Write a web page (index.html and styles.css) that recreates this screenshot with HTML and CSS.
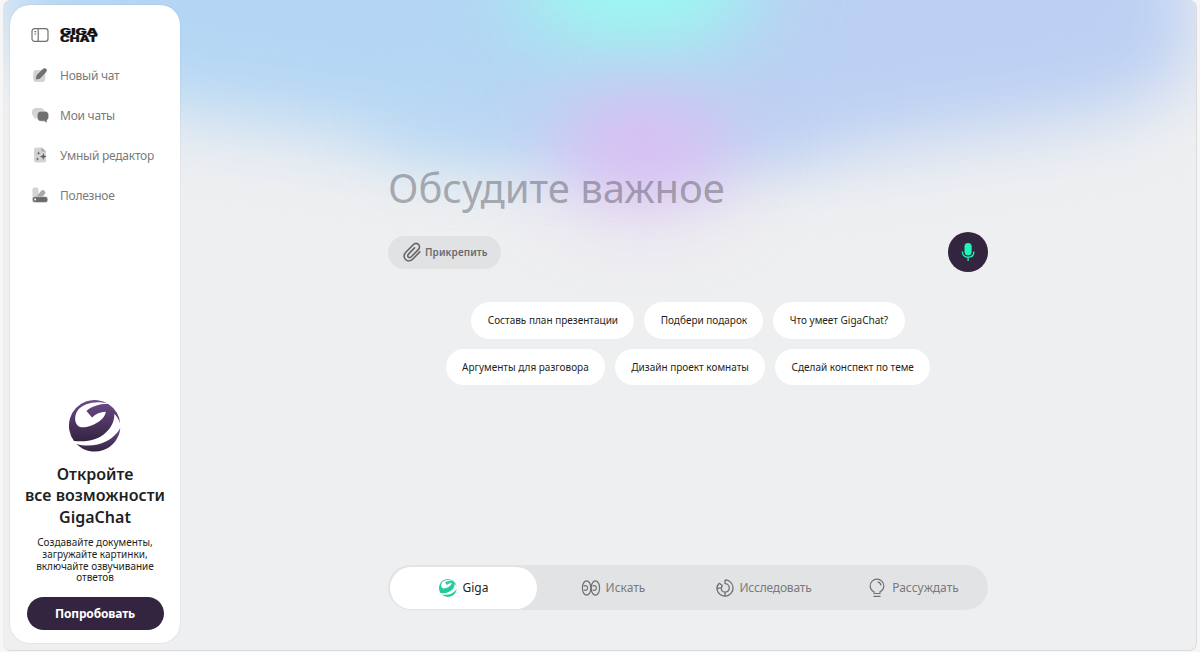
FILE: index.html
```
<!DOCTYPE html>

<html lang="ru">

<head>
	<title>GigaChat</title>
	<meta charset="utf-8" />
	<meta name="viewport" content="width=device-width,initial-scale=1" />
	<link rel="stylesheet" href="styles.css">
</head>

<body>
	<div class="app">
		<div class="glow">
			<div class="blob blob-left"></div>
			<div class="blob blob-right"></div>
			<div class="blob blob-middle"></div>
			<div class="blob blob-cyan"></div>
			<div class="blob blob-pink"></div>
		</div>

		<aside class="sidebar">
			<div class="brand">
				<svg class="icon" viewBox="0 0 20 20" fill="none" stroke="#707070" stroke-width="1.2">
					<rect x="2" y="3.6" width="16" height="12.8" rx="2.6" />
					<path d="M8.2 3.6v12.8M4.4 6.7h1.8M4.4 9h1.8" />
				</svg>
				<svg class="logo" viewBox="0 0 38 15" role="img">
					<text x="0" y="7.2" textLength="38" lengthAdjust="spacingAndGlyphs">GIGA</text>
					<text x="0" y="14.1" textLength="37.5" lengthAdjust="spacingAndGlyphs">CHAT</text>
				</svg>
			</div>

			<nav class="menu">
				<a class="menu-item">
					<svg class="icon" viewBox="0 0 20 20">
						<rect x="3.2" y="5" width="12" height="12" rx="3" fill="#d3d3d3" />
						<path d="M5.800 14.600l.7-4.400 6-5.900c1.200-1.200 2.700-1.500 3.700-.5s.8 2.500-.4 3.700l-5.900 6.200z" fill="#707070" />
					</svg>
					<span>Новый чат</span>
				</a>
				<a class="menu-item">
					<svg class="icon" viewBox="0 0 20 20">
						<path d="M6 3h4.500c2 0 4 1.500 4 4v3c0 2-2 3.300-4 3.300H6.500L4 13.500v-1.700C2.700 11 2 9.800 2 8.300V7c0-2.500 2-4 4-4z" fill="#d3d3d3" />
						<path d="M11 6.200h4c2 0 3.700 1.500 3.700 3.500V12c0 1.400-.6 2.400-1.700 3.200v2.800L14.300 16.200H11c-2.200 0-3.800-1.500-3.800-3.700V9.700c0-2 1.600-3.500 3.800-3.500z" fill="#707070" stroke="#fff" stroke-width=".5" />
					</svg>
					<span>Мои чаты</span>
				</a>
				<a class="menu-item">
					<svg class="icon" viewBox="0 0 20 20">
						<path d="M6 2.500h5.500l4.500 4V15.500c0 1.200-.8 2-2 2H6c-1.200 0-2-.8-2-2v-11c0-1.200.8-2 2-2z" fill="#d3d3d3" />
						<path d="M11.500 2.500v2.700c0 .8.5 1.300 1.300 1.300H16z" fill="#a9a9a9" />
						<path d="M13.300 8l.9 2.600 2.600.9-2.600.9-.9 2.600-.9-2.600-2.600-.9 2.600-.9zM8.600 6.300l.5 1.400 1.400.5-1.400.5-.5 1.400-.5-1.400-1.400-.5 1.400-.5zM7.500 12.300l.5 1.300 1.200.5-1.200.4-.5 1.300-.4-1.300-1.300-.4 1.300-.5z" fill="#606060" />
					</svg>
					<span>Умный редактор</span>
				</a>
				<a class="menu-item">
					<svg class="icon" viewBox="0 0 20 20">
						<rect x="2.500" y="2.500" width="6" height="14" rx="2" fill="#d3d3d3" />
						<path d="M4.500 14l6.700-8.200c.8-1 1.900-1 2.700-.3l.9.8c.9.800.9 1.800.1 2.700L9.500 15z" fill="#a9a9a9" />
						<rect x="2.400" y="11.600" width="15.400" height="5.800" rx="2.500" fill="#6a6a6a" stroke="#fff" stroke-width=".5" />
						<circle cx="5.200" cy="14.500" r="1" fill="#fff" />
					</svg>
					<span>Полезное</span>
				</a>
			</nav>

			<div class="promo">
				<svg class="promo-logo" viewBox="0 0 52 52">
					<defs>
						<linearGradient id="violet" x1="0" y1="0" x2="0" y2="1">
							<stop offset="0" stop-color="#6d4a8e" />
							<stop offset="1" stop-color="#33243f" />
						</linearGradient>
						<linearGradient id="green" x1="0" y1="0" x2="0" y2="1">
							<stop offset="0" stop-color="#2bd3a4" />
							<stop offset="1" stop-color="#1fc898" />
						</linearGradient>
						<g id="ball">
							<path fill-rule="evenodd" d="M5 41A25.700 25.700 0 1 1 51.300 24C50.200 20 48.200 16.500 45.300 13.700C46 27 33 44 5 41zM38.700 3.700C28 .3 14.500 3 9 10C4 17 5.500 27.300 14 27.300C23 27.300 36 20 36.800 11.800C31 12 27 14 23 17.500L17.500 11C21 7 30 3.800 38.700 3.700z" />
							<path d="M7.500 44A25.700 25.700 0 0 0 51.300 28C44 42 24 49 7.500 44z" />
						</g>
					</defs>
					<use href="#ball" fill="url(#violet)" />
				</svg>
				<h2>Откройте<br>все возможности<br>GigaChat</h2>
				<p>Создавайте документы,<br>загружайте картинки,<br>включайте озвучивание<br>ответов</p>
				<button class="try">Попробовать</button>
			</div>
		</aside>

		<main class="main">
			<section class="composer">
				<h1>Обсудите важное</h1>
				<div class="composer-row">
					<button class="attach">
						<svg viewBox="0 0 20 20" fill="none" stroke="#666" stroke-width="1.600" stroke-linecap="round">
							<path d="M17.800 9.900l-6.900 7.100c-2.300 2.300-5.300 2.400-7.300.5s-2-4.900.2-7.200l7.400-7.600c1.600-1.600 3.700-1.700 5.200-.3s1.500 3.500-.1 5.200l-7 7.200c-1 1-2.200 1-3 .3s-.8-2 .2-3l6-6.200" />
						</svg>
						<span>Прикрепить</span>
					</button>
					<button class="mic">
						<svg viewBox="0 0 20 20" fill="none" stroke="#21f5b8" stroke-width="1.300">
							<rect x="6.500" y="1" width="7.200" height="12.400" rx="3.600" fill="#21f5b8" stroke="none" />
							<path d="M4.300 9.500c0 3.500 2.400 5.700 5.800 5.700s5.800-2.200 5.800-5.700M10.100 15v4" />
						</svg>
					</button>
				</div>
			</section>

			<section class="chips">
				<div class="chips-row">
					<button class="chip">Составь план презентации</button>
					<button class="chip">Подбери подарок</button>
					<button class="chip">Что умеет GigaChat?</button>
				</div>
				<div class="chips-row">
					<button class="chip">Аргументы для разговора</button>
					<button class="chip">Дизайн проект комнаты</button>
					<button class="chip">Сделай конспект по теме</button>
				</div>
			</section>

			<div class="tabs">
				<button class="tab active">
					<svg viewBox="-3 -3 58 58"><use href="#ball" fill="url(#green)" /></svg>
					<span>Giga</span>
				</button>
				<button class="tab">
					<svg viewBox="0 0 20 20" fill="none" stroke="#707070" stroke-width="1.200">
						<ellipse cx="5.600" cy="10" rx="4.200" ry="7.200" />
						<ellipse cx="14.400" cy="10" rx="4.200" ry="7.200" />
						<path d="M2.800 8.300c1.400-1.500 3.800-.5 3.800 1.700s-2.400 3.200-3.800 1.700M11.600 8.300c1.400-1.500 3.800-.5 3.800 1.700s-2.400 3.200-3.800 1.700" />
					</svg>
					<span>Искать</span>
				</button>
				<button class="tab tab-wide">
					<svg viewBox="0 0 20 20" fill="none" stroke="#707070" stroke-width="1.300" stroke-linejoin="round">
						<path d="M10 1.900A8.100 8.100 0 1 1 2 11.500C1.700 9 2.600 6.800 4.300 5.300L7.300 7.500C6.500 8.500 6.300 9.300 6.500 10.300M10 1.900v3.700a4.300 4.300 0 0 1 0 8.600V18M2 11.500c1.500-1.600 3.500-1.700 4.500-1.200c-.5 2 .8 3.700 3.500 3.900" />
					</svg>
					<span>Исследовать</span>
				</button>
				<button class="tab">
					<svg viewBox="0 0 20 20" fill="none" stroke="#707070" stroke-width="1.200">
						<path d="M7 15.500v-1.700C4.700 12.600 3.200 10.500 3.200 8a6.800 6.800 0 0 1 13.600 0c0 2.500-1.500 4.600-3.800 5.800v1.700zM10.700 4.200c2 .2 3 1.200 3.300 3.100M6.500 18.300h7" />
					</svg>
					<span>Рассуждать</span>
				</button>
			</div>
		</main>
	</div>
</body>

</html>
```
FILE: styles.css
```
:root {
	--text-color: #1f1f22;
	--muted-color: #7a7a7a;
	--background-color: #eeeff1;
	--dark: #33243f;
}

* {
	box-sizing: border-box;
	margin: 0;
	padding: 0;
}

body {
	height: 652px;
	padding: 0 3px 1px;
	overflow: hidden;
	background-color: #f6f6f6;
	color: var(--text-color);
	font-family: "Noto Sans", "Open Sans", sans-serif;
}

button {
	border: none;
	font-family: inherit;
	cursor: pointer;
	white-space: nowrap;
}

.app {
	position: relative;
	display: flex;
	height: 651px;
	padding: 5px 0 7px 7px;
	overflow: hidden;
	border: solid #dcdcde;
	border-width: 0 1px 1px 0;
	border-radius: 8px;
	background-color: var(--background-color);
}

/* colour spots behind the page */
.glow {
	position: absolute;
	inset: 0;
	overflow: hidden;
}

.blob {
	position: absolute;
	border-radius: 50%;
}

.blob-left {
	left: 0;
	top: -185px;
	width: 720px;
	height: 320px;
	border-radius: 0 0 40% 30%;
	background-color: #b4d6f4;
	transform: rotate(8deg);
	filter: blur(38px);
}

.blob-right {
	left: 560px;
	top: -155px;
	width: 625px;
	height: 300px;
	border-radius: 0 0 20% 40%;
	background-color: #bbd0f3;
	transform: rotate(-8deg);
	filter: blur(36px);
}

.blob-middle {
	left: 360px;
	top: 60px;
	width: 480px;
	height: 110px;
	background: linear-gradient(90deg, #b6d8f4, #bfd0f3);
	opacity: .75;
	filter: blur(32px);
}

.blob-cyan {
	left: 515px;
	top: -120px;
	width: 240px;
	height: 180px;
	background-color: #9bf8f0;
	filter: blur(42px);
}

.blob-pink {
	left: 552px;
	top: 92px;
	width: 176px;
	height: 112px;
	background-color: #dabcf3;
	filter: blur(40px);
}

.sidebar {
	position: relative;
	display: flex;
	flex-direction: column;
	width: 170px;
	border-radius: 20px;
	background-color: #fff;
	box-shadow: 0 0 2px rgba(0, 0, 0, .12);
}

.icon {
	width: 20px;
	height: 20px;
}

.brand {
	display: flex;
	align-items: center;
	gap: 10px;
	height: 20px;
	margin: 20px 0 0 20px;
}

.logo {
	width: 38px;
	height: 15px;
	overflow: visible;
	font: 900 8.800px Inter, sans-serif;
	fill: #111;
	stroke: #111;
	stroke-width: .2;
}

.menu {
	display: flex;
	flex-direction: column;
	gap: 20px;
	margin: 20px 0 0 20px;
}

.menu-item {
	display: flex;
	align-items: center;
	gap: 10px;
	height: 20px;
	color: var(--muted-color);
	font-size: 12px;
	letter-spacing: -.25px;
	white-space: nowrap;
}

.promo {
	display: flex;
	flex-direction: column;
	align-items: center;
	margin-top: auto;
	padding-bottom: 13px;
	text-align: center;
}

.promo-logo {
	width: 52px;
	height: 52px;
}

.promo h2 {
	margin-top: 12px;
	font-size: 16px;
	font-weight: 600;
	line-height: 21.500px;
	white-space: nowrap;
}

.promo p {
	margin-top: 9px;
	font-size: 10px;
	line-height: 11.700px;
	white-space: nowrap;
}

.try {
	width: 137px;
	height: 33px;
	margin-top: 13px;
	border-radius: 17px;
	background-color: var(--dark);
	color: #fff;
	font-size: 12px;
	font-weight: 700;
	letter-spacing: -.15px;
}

.main {
	position: relative;
	display: flex;
	flex: 1;
	flex-direction: column;
	align-items: center;
	padding: 155px 0 33px;
}

.composer {
	width: 600px;
}

h1 {
	height: 56px;
	color: rgba(60, 60, 67, .4);
	font-size: 40px;
	font-weight: 400;
	line-height: 56px;
	white-space: nowrap;
}

.composer-row {
	display: flex;
	align-items: center;
	justify-content: space-between;
	margin-top: 16px;
}

.attach {
	display: flex;
	align-items: center;
	gap: 3px;
	width: 113px;
	height: 33px;
	padding-left: 14px;
	border-radius: 17px;
	background-color: rgba(0, 0, 0, .05);
	color: #6a6a6d;
	font-size: 10px;
	font-weight: 600;
	letter-spacing: .1px;
}

.attach svg {
	width: 20px;
	height: 20px;
}

.mic {
	display: flex;
	align-items: center;
	justify-content: center;
	width: 40px;
	height: 40px;
	border-radius: 50%;
	background-color: var(--dark);
}

.mic svg {
	width: 20px;
	height: 20px;
}

.chips {
	display: flex;
	flex-direction: column;
	gap: 10px;
	margin-top: 30px;
}

.chips-row {
	display: flex;
	justify-content: center;
	gap: 10px;
}

.chip {
	height: 36.500px;
	padding: 0 16.300px;
	border-radius: 19px;
	background-color: #fff;
	color: var(--text-color);
	font-size: 10px;
}

.tabs {
	display: flex;
	gap: 3px;
	width: 600px;
	height: 45px;
	margin-top: auto;
	padding: 1.500px;
	border-radius: 23px;
	background-color: #e2e3e4;
}

.tab {
	display: flex;
	flex: 1;
	align-items: center;
	justify-content: center;
	gap: 5px;
	border-radius: 21px;
	background: none;
	color: var(--muted-color);
	font-size: 12px;
}

.tab svg {
	width: 20px;
	height: 20px;
}

.tab-wide {
	letter-spacing: -.2px;
}

.tab.active {
	background-color: #fff;
	color: var(--text-color);
}
```
